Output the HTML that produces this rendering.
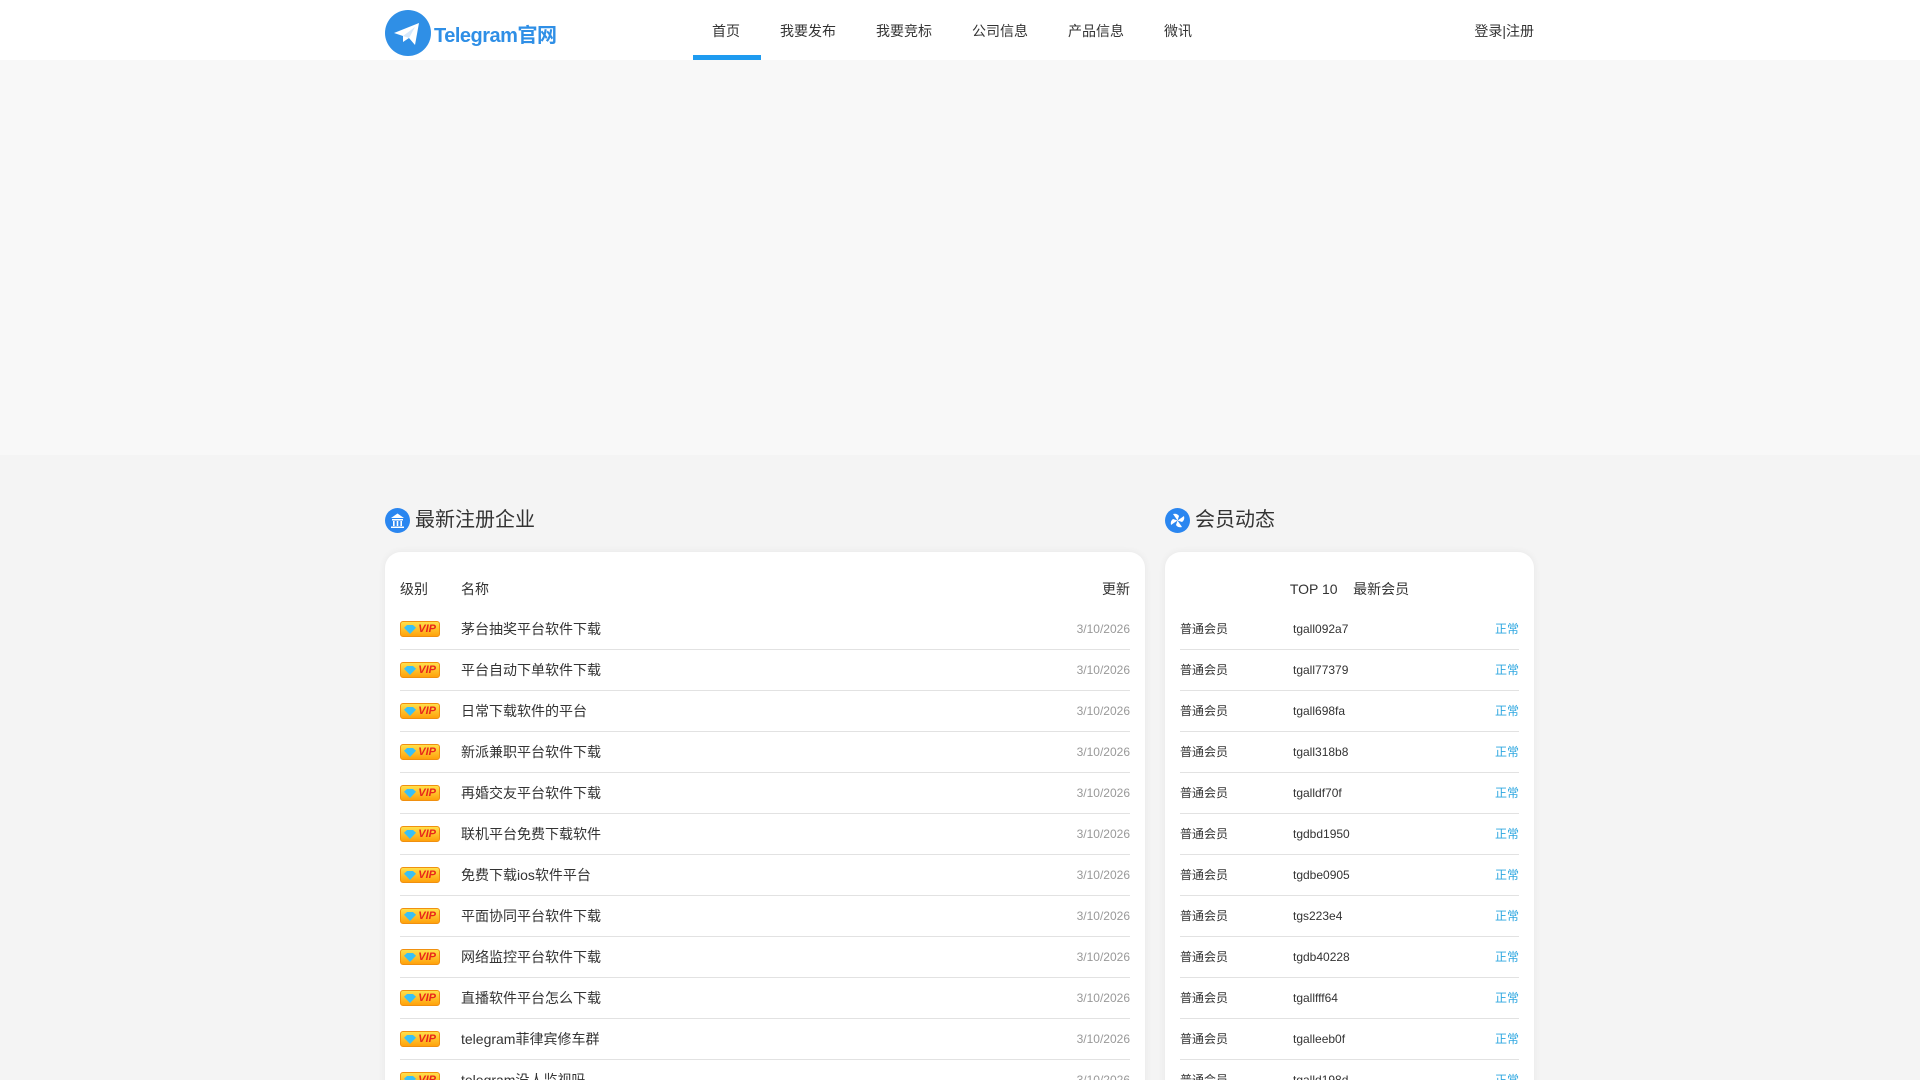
<!DOCTYPE html>
<html><head><meta charset="utf-8"><style>
*{margin:0;padding:0;box-sizing:border-box}
html,body{width:1920px;height:1080px;overflow:hidden}
body{background:#f4f4f4;font-family:"Liberation Sans","Noto Sans CJK SC",sans-serif;color:#333;position:relative}
.hd{position:absolute;left:0;top:0;width:1920px;height:60px;background:#fff;box-shadow:0 1px 3px rgba(0,0,0,.04)}
.logo{position:absolute;left:385px;top:10px;width:46px;height:46px}
.lt{position:absolute;left:434px;top:19px;font-size:20px;font-weight:bold;color:#2f8fe6;letter-spacing:-0.5px}
.nav a{position:absolute;top:21px;font-size:14px;color:#333;transform:translateX(-50%);white-space:nowrap}
.ul{position:absolute;left:693px;top:55px;width:68px;height:5px;background:#1e9bf0}
.login{position:absolute;right:386px;top:21px;font-size:14px;color:#333}
.ban{position:absolute;left:0;top:60px;width:1920px;height:395px;background:#f8f8f8}
.tt{position:absolute;top:505px;font-size:20px;color:#333;display:flex;align-items:center;line-height:30px}
.tt i{display:inline-block;width:25px;height:25px;border-radius:50%;background:#2a86f0;margin-right:5px;position:relative}
.card{position:absolute;top:552px;height:560px;background:#fff;border-radius:16px;box-shadow:0 0 8px rgba(0,0,0,.06)}
.row{position:absolute;left:15px;right:15px;height:41px;border-bottom:1px solid #e2e2e2;font-size:14px;line-height:40px}
.row span{position:absolute;top:0;white-space:nowrap}
.vip{position:absolute;left:0;top:12px;width:40px;height:16px;border-radius:3px;background:linear-gradient(#ffe04a,#ffa20c);border:1px solid #f09010}
.vip b{position:absolute;right:3px;top:0;font:italic bold 11px/14px "Liberation Sans",sans-serif;color:#e8261a}
.vip em{position:absolute;left:3px;top:3px;width:12px;height:9px;background:#3ac0f5;clip-path:polygon(0 30%,25% 0,75% 0,100% 30%,50% 100%)}
.d{right:0;color:#999;font-size:12px}
.s{right:0;color:#2ea7e0;font-size:12px}
.r2 span{font-size:12px}
</style></head><body>
<div class="hd">
<svg class="logo" viewBox="0 0 46 46"><circle cx="23" cy="23" r="23" fill="#2f8fe6"/><path d="M9 23 L34 13 L30 35 L24 28 L18 32 L18 26 Z" fill="#fff"/><path d="M18 26 L30 17 L24 28Z" fill="#d6e8fb"/></svg>
<div class="lt">Telegram官网</div>
<div class="nav"><a style="left:726px">首页</a><a style="left:808px">我要发布</a><a style="left:904px">我要竞标</a><a style="left:1000px">公司信息</a><a style="left:1096px">产品信息</a><a style="left:1178px">微讯</a></div>
<div class="ul"></div>
<div class="login">登录|注册</div>
</div>
<div class="ban"></div>
<div class="tt" style="left:385px"><i><svg width="25" height="25" viewBox="0 0 25 25"><path d="M6 10 L12.5 5.5 L19 10Z M7 11h11v1.5H7z M8 13h1.6v5H8z M11.7 13h1.6v5h-1.6z M15.4 13h1.6v5h-1.6z M6 18.5h13v1.5H6z" fill="#fff"/></svg></i>最新注册企业</div>
<div class="tt" style="left:1165px"><i><svg width="25" height="25" viewBox="0 0 25 25"><g fill="#fff"><path d="M12.5 12.5 L8 6 Q12 5 14 8Z"/><path d="M12.5 12.5 L19 8 Q20 12 17 14Z"/><path d="M12.5 12.5 L17 19 Q13 20 11 17Z"/><path d="M12.5 12.5 L6 17 Q5 13 8 11Z"/></g></svg></i>会员动态</div>
<div class="card" style="left:385px;width:760px">
<div class="row" style="top:17px;border:none"><span style="left:0">级别</span><span style="left:61px">名称</span><span style="right:0">更新</span></div>
<div id="L"></div>
</div>
<div class="card" style="left:1165px;width:369px">
<div class="row" style="top:17px;border:none"><span style="left:0;right:0;text-align:center;font-size:14px">TOP 10&nbsp;&nbsp;&nbsp;&nbsp;最新会员</span></div>
<div id="R"></div>
</div>
<script>
var n=["茅台抽奖平台软件下载","平台自动下单软件下载","日常下载软件的平台","新派兼职平台软件下载","再婚交友平台软件下载","联机平台免费下载软件","免费下载ios软件平台","平面协同平台软件下载","网络监控平台软件下载","直播软件平台怎么下载","telegram菲律宾修车群","telegram没人监视吗"];
var u=["tgall092a7","tgall77379","tgall698fa","tgall318b8","tgalldf70f","tgdbd1950","tgdbe0905","tgs223e4","tgdb40228","tgallfff64","tgalleeb0f","tgalld198d"];
var h="",g="";
for(var i=0;i<12;i++){var t=57+i*41;
h+='<div class="row" style="top:'+t+'px"><div class="vip"><em></em><b>VIP</b></div><span style="left:61px">'+n[i]+'</span><span class="d">3/10/2026</span></div>';
g+='<div class="row r2" style="top:'+t+'px"><span style="left:0">普通会员</span><span style="left:113px">'+u[i]+'</span><span class="s">正常</span></div>';}
document.getElementById("L").innerHTML=h;document.getElementById("R").innerHTML=g;
</script>
</body></html>
